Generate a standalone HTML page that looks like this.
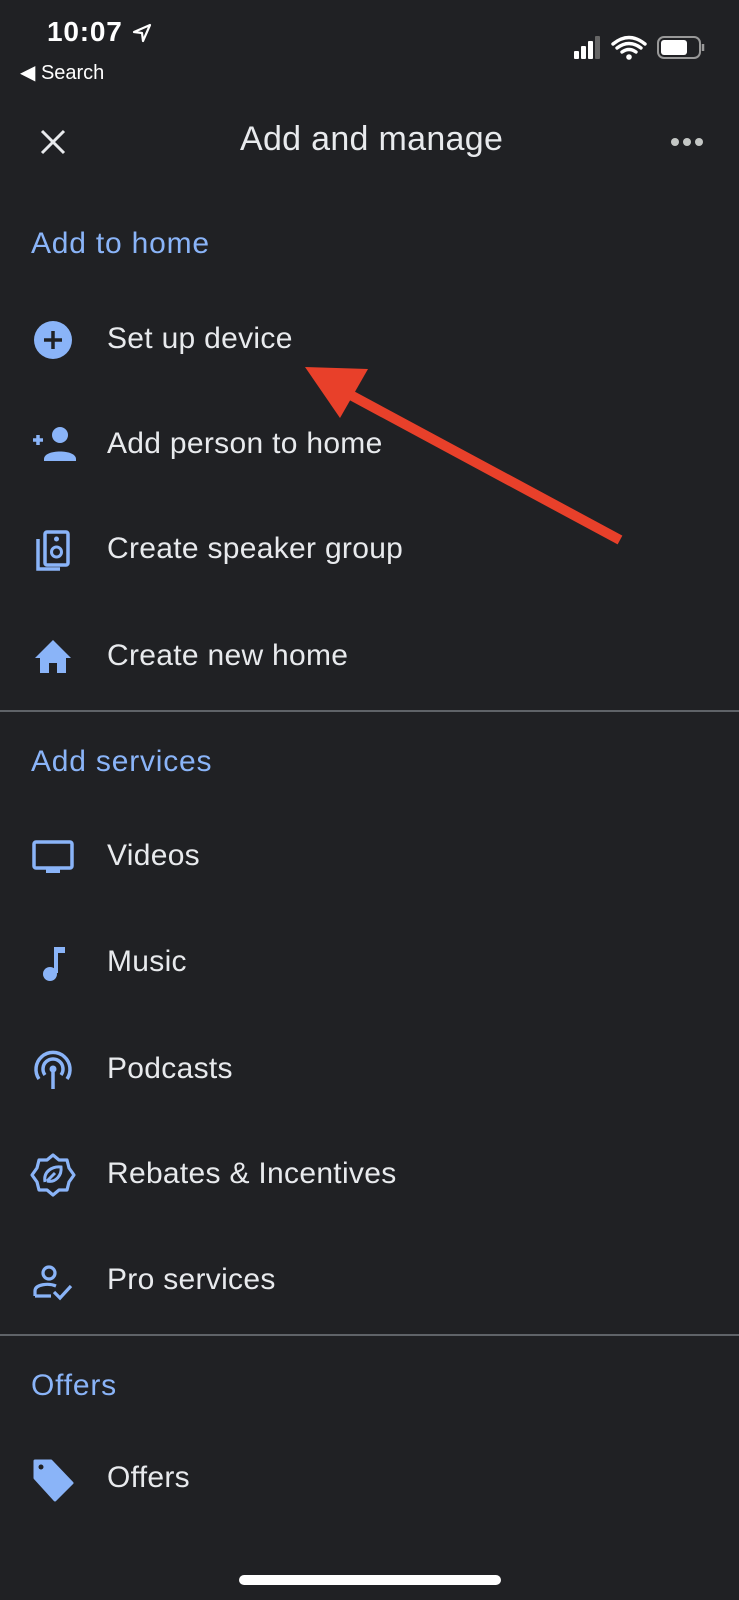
<!DOCTYPE html>
<html><head><meta charset="utf-8"><style>
body{margin:0;width:739px;height:1600px;background:#202124;position:relative;overflow:hidden;font-family:"Liberation Sans",sans-serif;color:#e8eaed}
.a{position:absolute;white-space:nowrap}
.h{color:#8ab4f8;font-size:30px;letter-spacing:0.8px;left:31px}
.t{font-size:30px;letter-spacing:0.3px;left:107px}
.ic{position:absolute;left:29px;width:48px;height:48px}
.div{position:absolute;left:0;width:739px;height:2px;background:#5f6368}
</style></head><body>
<div class="a" style="left:47px;top:16px;font-size:28px;letter-spacing:0.8px;font-weight:bold;color:#fff">10:07</div>
<svg class="a" style="left:131px;top:22px" width="22" height="22" viewBox="0 0 22 22"><path d="M19 3 L3 10 L11 11 L12 19 Z" fill="none" stroke="#fff" stroke-width="2.2" stroke-linejoin="round"/></svg>
<div class="a" style="left:20px;top:60px;font-size:20px;color:#fff">&#9664;&#xFE0E; Search</div>
<svg class="a" style="left:572px;top:34px" width="136" height="28" viewBox="0 0 136 28">
<rect x="2" y="17" width="5" height="8" rx="1" fill="#fff"/><rect x="9" y="12" width="5" height="13" rx="1" fill="#fff"/><rect x="16" y="7" width="5" height="18" rx="1" fill="#fff"/><rect x="23" y="2" width="5" height="23" rx="1" fill="#666"/>
<path d="M41 10 Q57 -3 73 10 M45 14 Q57 5 69 14 M50 18 Q57 13 64 18" fill="none" stroke="#fff" stroke-width="3.4" stroke-linecap="round"/><circle cx="57" cy="23" r="2.8" fill="#fff"/>
<rect x="86" y="3" width="42" height="21" rx="6" fill="none" stroke="#999" stroke-width="2"/><rect x="89" y="6" width="26" height="15" rx="3" fill="#fff"/><path d="M131 10 v7" stroke="#999" stroke-width="2.5"/></svg>
<svg class="a" style="left:39px;top:128px" width="28" height="28" viewBox="0 0 28 28"><path d="M3 3 L25 25 M25 3 L3 25" stroke="#e8eaed" stroke-width="3"/></svg>
<div class="a" style="left:240px;top:120px;font-size:34px;letter-spacing:0.3px">Add and manage</div>
<svg class="a" style="left:670px;top:137px" width="34" height="10"><circle cx="5" cy="5" r="4" fill="#c4c7c5"/><circle cx="17" cy="5" r="4" fill="#c4c7c5"/><circle cx="29" cy="5" r="4" fill="#c4c7c5"/></svg>

<div class="a h" style="top:227px">Add to home</div>
<svg class="ic" style="top:316px" viewBox="0 0 48 48"><circle cx="24" cy="24" r="19" fill="#8ab4f8"/><path d="M24 15v18M15 24h18" stroke="#202124" stroke-width="3.5"/></svg>
<div class="a t" style="top:322px">Set up device</div>
<svg class="ic" style="top:421px" viewBox="0 0 48 48"><path d="M4 19h10M9 14v10" stroke="#8ab4f8" stroke-width="3.5"/><circle cx="31" cy="14" r="8" fill="#8ab4f8"/><path d="M15 38 C15 28 47 28 47 38 V40 H15 Z" fill="#8ab4f8"/></svg>
<div class="a t" style="top:427px">Add person to home</div>
<svg class="ic" style="top:526px" viewBox="0 0 48 48"><rect x="16" y="6" width="23" height="33" rx="2" fill="none" stroke="#8ab4f8" stroke-width="3.5"/><circle cx="27.5" cy="13" r="2.5" fill="#8ab4f8"/><circle cx="27.5" cy="26" r="5" fill="none" stroke="#8ab4f8" stroke-width="3"/><path d="M9 13 V43 H31" fill="none" stroke="#8ab4f8" stroke-width="3.5"/></svg>
<div class="a t" style="top:532px">Create speaker group</div>
<svg class="ic" style="top:633px" viewBox="0 0 48 48"><path d="M24 7 L6 25 H11 V40 H20 V30 H28 V40 H37 V25 H42 Z" fill="#8ab4f8"/></svg>
<div class="a t" style="top:639px">Create new home</div>
<div class="div" style="top:710px"></div>

<div class="a h" style="top:745px">Add services</div>
<svg class="ic" style="top:833px" viewBox="0 0 48 48"><rect x="5" y="9" width="38" height="26" rx="2" fill="none" stroke="#8ab4f8" stroke-width="3.5"/><rect x="17" y="36" width="14" height="4" fill="#8ab4f8"/></svg>
<div class="a t" style="top:839px">Videos</div>
<svg class="ic" style="top:939px" viewBox="0 0 48 48"><path d="M27 8 V34" stroke="#8ab4f8" stroke-width="4"/><path d="M27 8 H36 V14 H27" fill="#8ab4f8"/><circle cx="21" cy="35" r="7" fill="#8ab4f8"/></svg>
<div class="a t" style="top:945px">Music</div>
<svg class="ic" style="top:1046px" viewBox="0 0 48 48"><path d="M10 33 A17 17 0 1 1 38 33" fill="none" stroke="#8ab4f8" stroke-width="3.5"/><path d="M16 29 A10 10 0 1 1 32 29" fill="none" stroke="#8ab4f8" stroke-width="3.5"/><circle cx="24" cy="23" r="3.5" fill="#8ab4f8"/><path d="M24 25 V43" stroke="#8ab4f8" stroke-width="3.5"/></svg>
<div class="a t" style="top:1052px">Podcasts</div>
<svg class="ic" style="top:1151px" viewBox="0 0 48 48"><path d="M24 4 L30 9 L38 9 L40 17 L45 24 L40 31 L38 39 L30 39 L24 44 L18 39 L10 39 L8 31 L3 24 L8 17 L10 9 L18 9 Z" fill="none" stroke="#8ab4f8" stroke-width="3.2" stroke-linejoin="round"/><path d="M16 31 C14 20 24 15 32 16 C33 24 27 32 18 30 M18 30 L26 22" fill="none" stroke="#8ab4f8" stroke-width="3"/></svg>
<div class="a t" style="top:1157px">Rebates &amp; Incentives</div>
<svg class="ic" style="top:1258px" viewBox="0 0 48 48"><circle cx="20" cy="15" r="6" fill="none" stroke="#8ab4f8" stroke-width="3.2"/><path d="M6 38 V33 C6 26 20 25 27 28 M6 38 H22" fill="none" stroke="#8ab4f8" stroke-width="3.2"/><path d="M25 34 L31 40 L42 28" fill="none" stroke="#8ab4f8" stroke-width="3.2"/></svg>
<div class="a t" style="top:1263px">Pro services</div>
<div class="div" style="top:1334px"></div>

<div class="a h" style="top:1369px">Offers</div>
<svg class="ic" style="top:1456px" viewBox="0 0 48 48"><path d="M6 5 H22 L43 27 L26 44 L6 22 Z" fill="#8ab4f8" stroke="#8ab4f8" stroke-width="3" stroke-linejoin="round"/><circle cx="12" cy="11" r="2.5" fill="#202124"/></svg>
<div class="a t" style="top:1461px">Offers</div>

<div class="a" style="left:239px;top:1575px;width:262px;height:10px;border-radius:5px;background:#fff"></div>

<svg class="a" style="left:0;top:0" width="739" height="600"><path d="M620 540 L345 392" stroke="#e8402a" stroke-width="10"/><path d="M305 367 L368 369 L340 418 Z" fill="#e8402a"/></svg>
</body></html>
